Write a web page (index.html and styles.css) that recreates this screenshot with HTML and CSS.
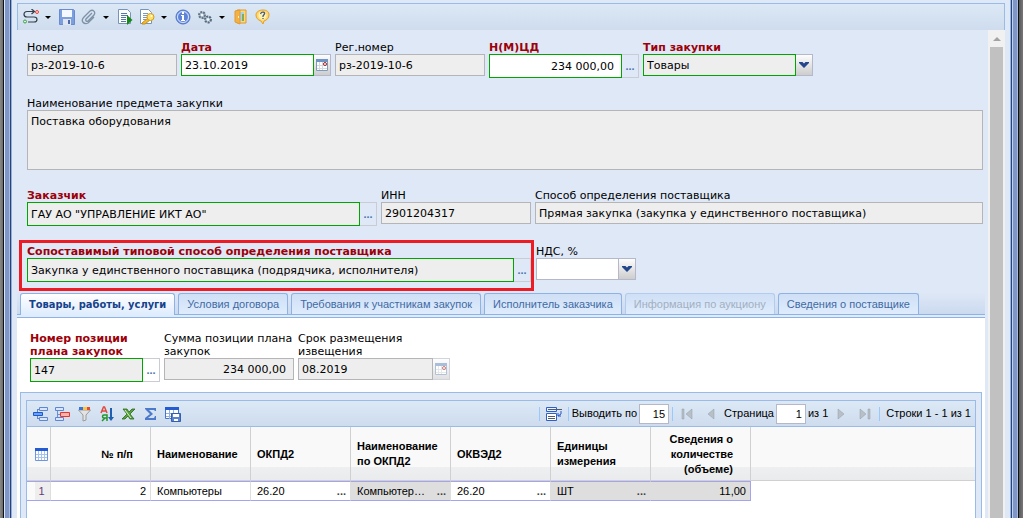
FILE: index.html
```html
<!DOCTYPE html>
<html lang="ru">
<head>
<meta charset="utf-8">
<title>Закупка</title>
<link rel="stylesheet" href="styles.css">
</head>
<body>
<div class="window">
  <div class="frame frame-left"></div>
  <main class="content">
    <div class="toolbar">
      <button class="tool split" aria-label="Маршрут"><svg width="16" height="16" viewBox="0 0 16 16"><path d="M11 2.500H4C0 2.500 0 8 4 8h7c4 0 4 5 0 5H5M8.500 0l3 2.500-3 2.500" fill="none" stroke="#333f4a" stroke-width="1.200"/><circle cx="14" cy="3" r="1.500" fill="#ffd5d5" stroke="#e5453c"/><circle cx="2" cy="12.500" r="1.500" fill="#d5f5d5" stroke="#3f9d48"/></svg></button>
      <button class="tool" aria-label="Сохранить"><svg width="16" height="16" viewBox="0 0 16 16"><path d="M.5.500h14l1 1v14H.5z" fill="#7c9fdd" stroke="#6a8bd0"/><path d="M3 1h10v7H3z" fill="#f4f8ff"/><path d="M4 10h8v6H4z" fill="#dfe6f2"/><path d="M9 11h2v4H9z" fill="#4c6ba8"/></svg></button>
      <button class="tool split" aria-label="Вложения"><svg width="16" height="16" viewBox="0 0 16 16"><path d="M11 4L5 10c-1 2 1 3 2 2l6-6c2-3-1-6-4-4L3 8c-4 4 0 8 4 6l6-6" fill="none" stroke="#7f91a6" stroke-width="1.300"/></svg></button>
      <button class="tool" aria-label="Выполнить"><svg width="16" height="16" viewBox="0 0 16 16"><path d="M1.500.500h9l3 3v11h-12z" fill="#fff" stroke="#7693b8"/><path d="M4 4.500h6M4 6.500h7M4 8.500h5M4 10.500h5M4 12.500h5" stroke="#5479aa"/><path d="M10 6l5.500 5-5.500 5z" fill="#168a18"/></svg></button>
      <button class="tool split" aria-label="Права"><svg width="16" height="16" viewBox="0 0 16 16"><path d="M1.500.500h8l3 3v11h-11z" fill="#fff" stroke="#7693b8"/><path d="M4 4.500h5M4 6.500h6M4 8.500h4M4 10.500h3" stroke="#7899c0"/><path d="M9 9l-6 5v1h3l5-4z" fill="#efbd34" stroke="#c98c15"/><circle cx="11.500" cy="8" r="3.500" fill="#ffe06b" stroke="#d59c1d"/><circle cx="12.500" cy="7" r="1" fill="#fff"/></svg></button>
      <button class="tool" aria-label="Информация"><svg width="16" height="16" viewBox="0 0 16 16"><circle cx="8" cy="8" r="7" fill="#7d9fe5" stroke="#4a6fc4"/><circle cx="8" cy="8" r="5.500" fill="#5f83d6" stroke="#dbe6ff"/><path d="M7 3h2v2H7zM6 6h3v5h1v1H6v-1h1V7H6z" fill="#fff"/></svg></button>
      <button class="tool split" aria-label="Настройки"><svg width="16" height="16" viewBox="0 0 16 16"><circle cx="5" cy="6" r="3" fill="#a9bac9" stroke="#647889" stroke-width="2" stroke-dasharray="2 1"/><circle cx="11" cy="10.500" r="3" fill="#b9c8d6" stroke="#566b7e" stroke-width="2" stroke-dasharray="2 1"/><circle cx="5" cy="6" r="1.300" fill="#f3f7fb"/><circle cx="11" cy="10.500" r="1.200" fill="#f3f7fb"/></svg></button>
      <button class="tool" aria-label="Выход"><svg width="16" height="16" viewBox="0 0 16 16"><path d="M4 1h9v13H4z" fill="#ffd874" stroke="#e0982f"/><path d="M6 3h5v9H6z" fill="#a4d4ed"/><path d="M2 2l5-1v14l-5-2z" fill="#f5b244" stroke="#e09a35"/><path d="M9 5h2v7H9z" fill="#80ad59"/><path d="M5 7h1v2H5z" fill="#fff5bd"/></svg></button>
      <button class="tool" aria-label="Справка"><svg width="16" height="16" viewBox="0 0 16 16"><path d="M8 1c4 0 6 2 6 5s-2 5-5 6l-1 3-2-3c-3-1-5-3-5-6s3-5 7-5z" fill="#ffd76a" stroke="#e4a028"/><circle cx="7.500" cy="6.500" r="4" fill="#fff1af"/><path d="M5.500 5c1-3 5-2 4 0L8 7v1M8 9v1" stroke="#465d85" fill="none" stroke-width="1.300"/></svg></button>
    </div>
    <div class="viewport">
      <div class="page">
        <form class="form">
          <div class="row">
            <div class="field w150"><label for="num">Номер</label><div class="control"><input id="num" class="ro" value="рз-2019-10-6" readonly></div></div>
            <div class="field w150"><label class="req" for="date">Дата</label><div class="control"><input id="date" class="must" value="23.10.2019"><button type="button" class="trigger" aria-label="Календарь"><svg width="14" height="14" viewBox="0 0 14 14"><path d="M1.500 1.500h11v11h-11z" fill="#fff" stroke="#7c9abc"/><path d="M1 1h12v3H1z" fill="#6f94c4"/><path d="M2 7.500h10M2 10.500h10M4.500 4v8M7.500 4v8" stroke="#d3d9e0"/><circle cx="10" cy="6" r="1.500" fill="#fff" stroke="#a32020"/></svg></button></div></div>
            <div class="field w150"><label for="reg">Рег.номер</label><div class="control"><input id="reg" class="ro" value="рз-2019-10-6" readonly></div></div>
            <div class="field w150"><label class="req" for="price">Н(М)ЦД</label><div class="control"><input id="price" class="must tall num" value="234 000,00"><button type="button" class="dots" aria-label="Выбрать сумму">...</button></div></div>
            <div class="field w170"><label class="req" for="type">Тип закупки</label><div class="control"><select id="type" class="ro must"><option>Товары</option></select><span class="trigger"><svg width="14" height="14" viewBox="0 0 14 14"><path d="M2 4h3.500L7 5.500 8.500 4H12v1L7 10 2 5z" fill="#24468a"/></svg></span></div></div>
          </div>
          <div class="row">
            <div class="field wide"><label for="subject">Наименование предмета закупки</label><textarea id="subject" class="ro" readonly>Поставка оборудования</textarea></div>
          </div>
          <div class="row">
            <div class="field w350"><label class="req" for="cust">Заказчик</label><div class="control"><input id="cust" class="ro must tall" value='ГАУ АО "УПРАВЛЕНИЕ ИКТ АО"' readonly><button type="button" class="dots" aria-label="Выбрать заказчика">...</button></div></div>
            <div class="field w150"><label for="inn">ИНН</label><div class="control"><input id="inn" class="ro" value="2901204317" readonly></div></div>
            <div class="field wide"><label for="method">Способ определения поставщика</label><div class="control"><input id="method" class="ro" value="Прямая закупка (закупка у единственного поставщика)" readonly></div></div>
          </div>
          <div class="row marked-row">
            <div class="field marked"><label class="req" for="typical">Сопоставимый типовой способ определения поставщика</label><div class="control"><input id="typical" class="ro must tall" value="Закупка у единственного поставщика (подрядчика, исполнителя)" readonly><button type="button" class="dots" aria-label="Выбрать способ">...</button></div></div>
            <div class="field w100 beside"><label for="vat">НДС, %</label><div class="control"><select id="vat"><option></option></select><span class="trigger"><svg width="14" height="14" viewBox="0 0 14 14"><path d="M2 4h3.500L7 5.500 8.500 4H12v1L7 10 2 5z" fill="#24468a"/></svg></span></div></div>
          </div>
        </form>
        <nav class="tabs">
          <button class="tab active">Товары, работы, услуги</button>
          <button class="tab">Условия договора</button>
          <button class="tab">Требования к участникам закупок</button>
          <button class="tab">Исполнитель заказчика</button>
          <button class="tab" disabled>Информация по аукциону</button>
          <button class="tab">Сведения о поставщике</button>
        </nav>
        <section class="panel">
          <div class="row position">
            <div class="field w130"><label class="req" for="pos">Номер позиции плана закупок</label><div class="control"><input id="pos" class="ro must tall" value="147" readonly><button type="button" class="dots" aria-label="Выбрать позицию">...</button></div></div>
            <div class="field w130"><label for="sum">Сумма позиции плана закупок</label><div class="control"><input id="sum" class="ro num" value="234 000,00" readonly></div></div>
            <div class="field w152"><label for="term">Срок размещения извещения</label><div class="control"><input id="term" class="ro" value="08.2019" readonly><button type="button" class="trigger" disabled aria-label="Календарь"><svg width="14" height="14" viewBox="0 0 14 14"><path d="M1.500 1.500h11v11h-11z" fill="#fff" stroke="#7c9abc"/><path d="M1 1h12v3H1z" fill="#6f94c4"/><path d="M2 7.500h10M2 10.500h10M4.500 4v8M7.500 4v8" stroke="#d3d9e0"/><circle cx="10" cy="6" r="1.500" fill="#fff" stroke="#a32020"/></svg></button></div></div>
          </div>
          <div class="grid-panel">
            <div class="grid">
              <div class="grid-bar">
                <button class="tool" aria-label="Добавить строку"><svg width="16" height="16" viewBox="0 0 16 16"><path d="M6.500 1.500h8v3h-8zM6.500 11.500h8v3h-8z" fill="#d8e6fb" stroke="#5f86d0"/><path d="M4 3.500h2M4 12.500h2M4.500 3v10" fill="none" stroke="#5f86d0"/><path d="M.5 6.500h9v3h-9z" fill="#6ba0f8" stroke="#1d58c4"/></svg></button>
                <button class="tool" aria-label="Удалить строку"><svg width="16" height="16" viewBox="0 0 16 16"><path d="M.5 1.500h8v3h-8zM.5 11.500h8v3h-8z" fill="#d8e6fb" stroke="#5f86d0"/><path d="M2.500 5v6M2 8.500h3" stroke="#6f91d0"/><path d="M5.500 6.500h9v4h-9z" fill="#ffb5ad" stroke="#e8352a"/></svg></button>
                <button class="tool" aria-label="Фильтр"><svg width="16" height="16" viewBox="0 0 16 16"><path d="M1.500 4h12L9 9v5l-3 1V9z" fill="#e3e3e3" stroke="#9b9b9b"/><path d="M2 1h4v3H2z" fill="#3975dd"/><path d="M6 1h4v3H6z" fill="#ffc439"/><path d="M10 1h3v3h-3z" fill="#e34d38"/></svg></button>
                <button class="tool" aria-label="Сортировка"><svg width="16" height="16" viewBox="0 0 16 16"><path d="M2 7l2.500-6h1L8 7M3 5h4" fill="none" stroke="#e04b3f" stroke-width="1.500"/><path d="M8 15V9H5c-2 0-2 3 0 3h3M6 12l-3 3" fill="none" stroke="#23972e" stroke-width="1.500"/><path d="M11 2h2v9h2l-3 4-3-4h2z" fill="#1e5fb0"/></svg></button>
                <button class="tool" aria-label="Excel"><svg width="16" height="16" viewBox="0 0 16 16"><path d="M2 3h4l2 3 3-3h3L9 8l4 5H9L7 10l-3 3H1l5-5z" fill="#5aa13b" stroke="#2a6b1d" stroke-width=".8"/><path d="M4 4l6 8" stroke="#d9efca"/></svg></button>
                <button class="tool" aria-label="Итоги"><svg width="16" height="16" viewBox="0 0 16 16"><path d="M2 2h11v3h-1l-1-1H6l4 4-5 4h6l1-2h1v4H2v-2l5-4-5-5z" fill="#4c79c9"/></svg></button>
                <button class="tool" aria-label="Сохранить вид"><svg width="16" height="16" viewBox="0 0 16 16"><path d="M.5 1.500h13v11H.5z" fill="#fff" stroke="#4773cb"/><path d="M0 1h14v3H0z" fill="#245bd3"/><path d="M1 7.500h12M1 10.500h12M4.500 4v9M8.500 4v9" stroke="#91afe0"/><path d="M6.500 7.500h9v8h-9z" fill="#5b83cd" stroke="#345fae"/><path d="M8 8h6v3H8zM9 13h4v2H9z" fill="#fff"/></svg></button>
                <div class="pager">
                  <i class="sep"></i>
                  <button class="tool" aria-label="Перенос строк"><svg width="16" height="16" viewBox="0 0 16 16"><path d="M.5 1.500h10v4H.5z" fill="#eaf1ff" stroke="#2f5fc9"/><path d="M.5 7.500h10v7H.5z" fill="#fff" stroke="#2f5fc9"/><path d="M2 3.500h14M2 10.500h7M2 12.500h7" stroke="#525b68"/><path d="M15 5v3l-3 2M12 7v3h3" fill="none" stroke="#2757c7"/></svg></button>
                  <i class="sep"></i>
                  <label for="per">Выводить по</label><input id="per" value="15">
                  <i class="sep"></i>
                  <button class="page-btn" aria-label="Первая"><svg width="12" height="12" viewBox="0 0 12 12"><path d="M1 1h2v10H1zM11 1v10L5 6z" fill="#b8bfc7" stroke="#939da8" stroke-width=".5"/></svg></button>
                  <button class="page-btn" aria-label="Назад"><svg width="12" height="12" viewBox="0 0 12 12"><path d="M9 1v10L3 6z" fill="#b8bfc7" stroke="#939da8" stroke-width=".5"/></svg></button>
                  <label for="pg">Страница</label><input id="pg" value="1"><span>из 1</span>
                  <button class="page-btn" aria-label="Вперёд"><svg width="12" height="12" viewBox="0 0 12 12"><path d="M3 1v10l6-5z" fill="#b8bfc7" stroke="#939da8" stroke-width=".5"/></svg></button>
                  <button class="page-btn" aria-label="Последняя"><svg width="12" height="12" viewBox="0 0 12 12"><path d="M9 1h2v10H9zM1 1v10l6-5z" fill="#b8bfc7" stroke="#939da8" stroke-width=".5"/></svg></button>
                  <i class="sep"></i>
                  <span class="total">Строки 1 - 1 из 1</span>
                </div>
              </div>
              <div class="grid-head">
              <table class="table">
                <colgroup><col class="c-num"><col><col><col><col><col><col><col></colgroup>
                <thead><tr>
                  <th class="corner"><svg width="13" height="13" viewBox="0 0 13 13"><path d="M.5.500h12v12H.5z" fill="#fff" stroke="#6f96dd"/><path d="M0 0h13v3H0z" fill="#245bd3"/><path d="M1 6.500h11M1 9.500h11M3.500 3v9M6.500 3v9M9.500 3v9" stroke="#a5c3ee"/></svg></th>
                  <th class="right">№ п/п</th><th>Наименование</th><th>ОКПД2</th><th>Наименование по ОКПД2</th><th>ОКВЭД2</th><th>Единицы измерения</th><th class="right">Сведения о количестве (объеме)</th>
                </tr></thead>
                <tbody><tr>
                  <td class="rownum">1</td><td class="right">2</td><td>Компьютеры</td>
                  <td><div class="cell"><span>26.20</span><b>...</b></div></td>
                  <td class="gray"><div class="cell"><span>Компьютер…</span><b>...</b></div></td>
                  <td><div class="cell"><span>26.20</span><b>...</b></div></td>
                  <td class="gray"><div class="cell"><span>ШТ</span><b>...</b></div></td>
                  <td class="gray right">11,00</td>
                </tr></tbody>
              </table>
              </div>
            </div>
          </div>
        </section>
      </div>
      <div class="scrollbar"><svg width="17" height="17" viewBox="0 0 17 17"><path d="M5 11l4-4 4 4z" fill="#a3a3a3"/></svg><div class="thumb"></div></div>
    </div>
  </main>
  <div class="frame frame-right"></div>
</div>
</body>
</html>
```

FILE: styles.css
```css
* { box-sizing: border-box; }
body {
  margin: 0;
  background: #dfe8f6;
  font: 11px/13px "DejaVu Sans", Verdana, sans-serif;
  color: #000;
}
button, input, select, textarea { font: inherit; color: inherit; margin: 0; border-radius: 0; }
button { padding: 0; border: 0; background: none; }
svg { display: block; }

.window { display: flex; height: 100vh; overflow: hidden; }
.frame { flex: none; }
.frame-left {
  width: 17px;
  background: linear-gradient(90deg, #8a8a8a 0, #6a6a6a 3px, #111 3px 4px, #dde6f5 4px 5px, #7f97c8 5px 9px, #a9bce0 9px 10px, #2c4270 10px 11px, #8fb0df 11px 12px, #dfe8f6 12px);
}
.frame-right {
  width: 18px;
  background: linear-gradient(90deg, #dfe8f6 0 5px, #8fb5e8 5px 6px, #2c4270 6px 7px, #c3d1ec 7px 8px, #7f97c8 8px 12px, #a9bce0 12px 13px, #111 13px 14px, #55585c 14px, #777 18px);
}
.content { flex: 1; min-width: 0; display: flex; flex-direction: column; padding-top: 3px; }

.toolbar {
  display: flex;
  align-items: center;
  flex: none;
  height: 27px;
  padding: 0 2px;
  border: 1px solid #99bbe8;
  border-bottom: 0;
  background: linear-gradient(#dce8f5, #cedcee);
}
.tool { display: flex; align-items: center; width: 22px; height: 22px; padding: 3px; flex: none; }
.split { width: 36px; gap: 6px; }
.split::after { content: ""; border: 3px solid transparent; border-top-color: #000; border-bottom: 0; }

.viewport { flex: 1; min-height: 0; display: flex; }
.page { flex: 1; min-width: 0; display: flex; flex-direction: column; padding-right: 3px; }
.scrollbar { width: 17px; background: #f1f1f1; display: flex; flex-direction: column; align-items: center; }
.thumb { width: 13px; flex: 1; background: #c1c1c1; }

.form { display: flex; flex-direction: column; padding: 10px 2px 0 10px; gap: 20px; }
.row { display: flex; gap: 4px; align-items: flex-start; }
.field { display: flex; flex-direction: column; flex: none; }
.field label { padding-top: 1px; }
.row .field.wide { flex: 1; }
.w100 { width: 100px; }
.w130 { width: 130px; }
.w150 { width: 150px; }
.w152 { width: 152px; }
.w170 { width: 170px; }
.w350 { width: 350px; }
.form .row:nth-child(1) { height: 36px; }
.form .row:nth-child(2) { height: 72px; }
.form .row:nth-child(3) { height: 38px; }
.req { font-weight: bold; color: #9d0009; }
.control { display: flex; align-items: flex-start; }
input, select, textarea {
  flex: 1;
  min-width: 0;
  height: 22px;
  padding: 0 3px;
  border: 1px solid #b5b8c8;
  background: #fff;
  outline: 0;
}
select { appearance: none; }
.ro { background: #eee; border-color: #b5b5b8; }
.must { border: 1px solid #00a500; }
.tall { height: 24px; }
.num { text-align: right; padding-right: 7px; }
textarea { flex: none; width: 100%; height: 60px; padding: 4px 3px; line-height: 13px; resize: none; overflow: hidden; }
.trigger {
  width: 17px;
  height: 22px;
  flex: none;
  display: flex;
  align-items: center;
  justify-content: center;
  border: solid #b5b8c8;
  border-width: 1px 1px 1px 0;
  background: linear-gradient(#fdfdfd, #cdcdcd);
}
.trigger:disabled { opacity: .6; }
.dots {
  width: 17px;
  height: 24px;
  flex: none;
  border: 1px solid #c9ccd2;
  border-left: 0;
  color: #4c74ad;
  font-family: "Liberation Sans", Arial, sans-serif;
  font-weight: bold;
}
.marked-row { margin-left: -8px; gap: 2px; margin-top: -6px; }
.marked { width: 515px; border: 3px solid #ed1c24; padding: 1px 0 6px 5px; }
.beside { padding-top: 4px; }

.tabs {
  display: flex;
  gap: 3px;
  margin-top: 1px;
  padding: 1px 3px 0;
  height: 26px;
  flex: none;
  border-bottom: 1px solid #8db2e3;
  background: linear-gradient(#dfe8f6, #cbdaf0 22px, #8db2e3 22px 23px, #deecfd 23px);
}
.tab {
  height: 21px;
  padding: 0 8px;
  border: 1px solid #8db2e3;
  border-bottom: 0;
  border-radius: 3px 3px 0 0;
  background: linear-gradient(#cfdff5, #deecfd);
  color: #416aa3;
  font-family: "Liberation Sans", Tahoma, sans-serif;
  white-space: nowrap;
}
.tab.active {
  height: 22px;
  background: linear-gradient(#fff, #deecfd);
  color: #15428b;
  font-family: "DejaVu Sans Condensed", Tahoma, sans-serif;
  font-weight: bold;
}
.tab:disabled { color: #a3afbf; border-color: #b3cbec; }

.panel { flex: 1; min-height: 0; display: flex; flex-direction: column; background: #fff; padding: 13px 3px 0; gap: 10px; }
.position { padding-left: 10px; }
.position .dots { background: #fff; }
.grid-panel { flex: 1; display: flex; padding: 7px 5px 0; border: 1px solid #99bbe8; border-bottom: 0; background: #dfe8f6; }
.grid {
  flex: 1;
  min-width: 0;
  border: 1px solid #99bbe8;
  border-bottom: 0;
  background: #fff;
  font-family: "Liberation Sans", Arial, sans-serif;
}
.grid-bar {
  display: flex;
  align-items: center;
  height: 26px;
  padding: 0 3px;
  border-bottom: 1px solid #99bbe8;
  background: linear-gradient(#dce8f5, #cedcee);
}
.pager { display: flex; align-items: center; margin-left: auto; gap: 2px; white-space: nowrap; }
.pager input { flex: none; width: 30px; height: 20px; text-align: right; }
.sep { width: 1px; height: 14px; margin: 0 1px; background: #98c8ff; }
.page-btn { width: 22px; display: flex; justify-content: center; }
.total { padding: 0 1px 0 3px; }

.grid-head { background: linear-gradient(#f9f9f9 40px, #eeeff1 40px, #e9ebed 53px, #d0d0d0 53px 54px, #fff 54px); }
.table { table-layout: fixed; width: 724px; border-collapse: separate; border-spacing: 0; }
.c-num { width: 24px; }
th { height: 54px; padding: 0 12px 0 6px; border-right: 1px solid #d0d0d0; text-align: left; line-height: 15px; }
th.right { padding: 0 17px 0 6px; }
th.corner { padding: 0 0 0 8px; }
td { height: 20px; padding: 0 4px 0 6px; border: 1px solid #a3a3f0; border-left: 0; }
td:not(:last-child) { border-right-color: #dedede; }
.right { text-align: right; }
.gray { background: #dedede; }
.rownum { text-align: center; color: #633c7b; background: linear-gradient(90deg, #fafafa 8px, #eee 8px); padding: 0 0 0 6px; }
.cell { display: flex; justify-content: space-between; }
.cell b { color: #444; }
```
